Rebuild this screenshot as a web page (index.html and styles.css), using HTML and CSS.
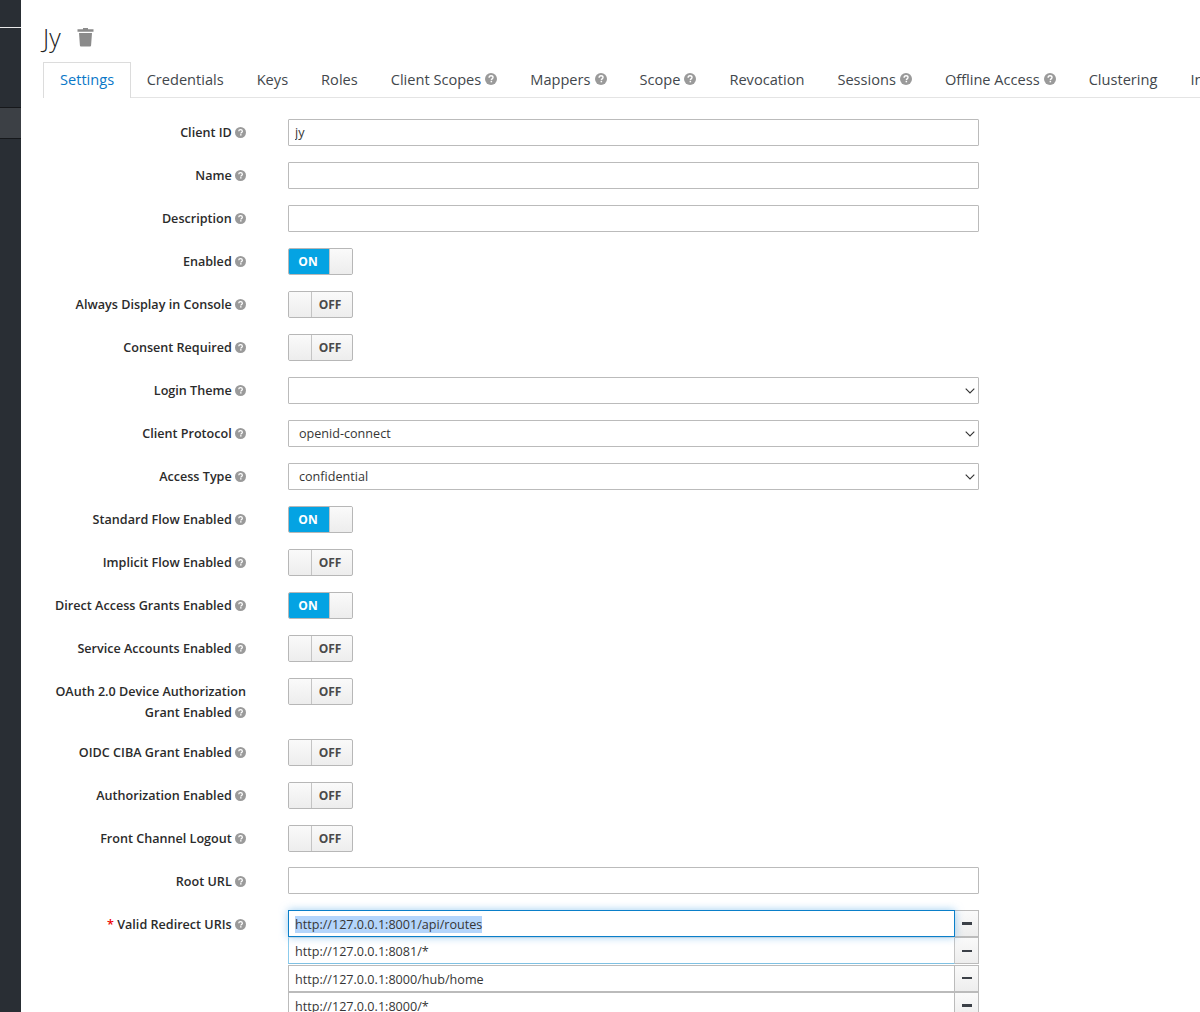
FILE: index.html
```html
<!DOCTYPE html>
<html lang="en">
<head>
<meta charset="utf-8">
<title>Jy</title>
<link rel="stylesheet" href="styles.css">
</head>
<body>
<svg class="defs" width="0" height="0" aria-hidden="true">
  <symbol id="help" viewBox="0 0 12 12">
    <circle cx="6" cy="6" r="6" fill="#9a9a9a"/>
    <path d="M4.1 4.7c0-1.2.9-1.9 2-1.9 1.1 0 1.9.7 1.9 1.7 0 1.4-1.6 1.4-1.6 2.5" fill="none" stroke="#fff" stroke-width="1.4"/>
    <rect x="5.6" y="7.8" width="1.5" height="1.5" fill="#fff"/>
  </symbol>
</svg>
<div class="app">
  <aside class="sidebar">
    <div class="side-line"></div>
    <div class="side-active"></div>
  </aside>
  <main class="main">
    <header class="title">
      <h1>Jy</h1>
      <svg class="trash" viewBox="0 0 17 20" aria-hidden="true"><path d="M6 2.2V1h5v1.2h5.5v2.6H.5V2.2zM2 6h13l-.9 12.2c0 .9-.6 1.3-1.3 1.3H4.2c-.7 0-1.3-.4-1.3-1.3z" fill="#8b8b8b"/></svg>
    </header>
    <nav class="tabs">
      <a class="tab active">Settings</a>
      <a class="tab">Credentials</a>
      <a class="tab">Keys</a>
      <a class="tab">Roles</a>
      <a class="tab">Client Scopes <svg class="help tab-help"><use href="#help"/></svg></a>
      <a class="tab">Mappers <svg class="help tab-help"><use href="#help"/></svg></a>
      <a class="tab">Scope <svg class="help tab-help"><use href="#help"/></svg></a>
      <a class="tab">Revocation</a>
      <a class="tab">Sessions <svg class="help tab-help"><use href="#help"/></svg></a>
      <a class="tab">Offline Access <svg class="help tab-help"><use href="#help"/></svg></a>
      <a class="tab">Clustering</a>
      <a class="tab">In</a>
    </nav>
    <form class="form">
      <div class="row"><label>Client ID <svg class="help"><use href="#help"/></svg></label><input class="field" value="jy"></div>
      <div class="row"><label>Name <svg class="help"><use href="#help"/></svg></label><input class="field"></div>
      <div class="row"><label>Description <svg class="help"><use href="#help"/></svg></label><input class="field"></div>
      <div class="row"><label>Enabled <svg class="help"><use href="#help"/></svg></label><div class="switch on"><span class="state">ON</span><span class="knob"></span></div></div>
      <div class="row"><label>Always Display in Console <svg class="help"><use href="#help"/></svg></label><div class="switch"><span class="knob"></span><span class="state">OFF</span></div></div>
      <div class="row"><label>Consent Required <svg class="help"><use href="#help"/></svg></label><div class="switch"><span class="knob"></span><span class="state">OFF</span></div></div>
      <div class="row"><label>Login Theme <svg class="help"><use href="#help"/></svg></label><div class="field select"><span></span><svg class="chev" viewBox="0 0 10 6"><path d="M.7.7 5 5 9.3.7" fill="none" stroke="#333" stroke-width="1.1"/></svg></div></div>
      <div class="row"><label>Client Protocol <svg class="help"><use href="#help"/></svg></label><div class="field select"><span>openid-connect</span><svg class="chev" viewBox="0 0 10 6"><path d="M.7.7 5 5 9.3.7" fill="none" stroke="#333" stroke-width="1.1"/></svg></div></div>
      <div class="row"><label>Access Type <svg class="help"><use href="#help"/></svg></label><div class="field select"><span>confidential</span><svg class="chev" viewBox="0 0 10 6"><path d="M.7.7 5 5 9.3.7" fill="none" stroke="#333" stroke-width="1.1"/></svg></div></div>
      <div class="row"><label>Standard Flow Enabled <svg class="help"><use href="#help"/></svg></label><div class="switch on"><span class="state">ON</span><span class="knob"></span></div></div>
      <div class="row"><label>Implicit Flow Enabled <svg class="help"><use href="#help"/></svg></label><div class="switch"><span class="knob"></span><span class="state">OFF</span></div></div>
      <div class="row"><label>Direct Access Grants Enabled <svg class="help"><use href="#help"/></svg></label><div class="switch on"><span class="state">ON</span><span class="knob"></span></div></div>
      <div class="row"><label>Service Accounts Enabled <svg class="help"><use href="#help"/></svg></label><div class="switch"><span class="knob"></span><span class="state">OFF</span></div></div>
      <div class="row tall"><label>OAuth 2.0 Device Authorization Grant Enabled <svg class="help"><use href="#help"/></svg></label><div class="switch"><span class="knob"></span><span class="state">OFF</span></div></div>
      <div class="row"><label>OIDC CIBA Grant Enabled <svg class="help"><use href="#help"/></svg></label><div class="switch"><span class="knob"></span><span class="state">OFF</span></div></div>
      <div class="row"><label>Authorization Enabled <svg class="help"><use href="#help"/></svg></label><div class="switch"><span class="knob"></span><span class="state">OFF</span></div></div>
      <div class="row before-url"><label>Front Channel Logout <svg class="help"><use href="#help"/></svg></label><div class="switch"><span class="knob"></span><span class="state">OFF</span></div></div>
      <div class="row low-label"><label>Root URL <svg class="help"><use href="#help"/></svg></label><input class="field"></div>
      <div class="row low-label"><label><span class="req">*</span> Valid Redirect URIs <svg class="help"><use href="#help"/></svg></label>
        <div class="uris">
          <div class="uri"><div class="uri-text focus"><mark>http://127.0.0.1:8001/api/routes</mark></div><button class="minus" type="button"><i></i></button></div>
          <div class="uri"><div class="uri-text hover">http://127.0.0.1:8081/*</div><button class="minus" type="button"><i></i></button></div>
          <div class="uri"><div class="uri-text">http://127.0.0.1:8000/hub/home</div><button class="minus" type="button"><i></i></button></div>
          <div class="uri"><div class="uri-text">http://127.0.0.1:8000/*</div><button class="minus" type="button"><i></i></button></div>
        </div>
      </div>
    </form>
  </main>
</div>
</body>
</html>
```
FILE: styles.css
```css
html, body {
  margin: 0;
  height: 1012px;
  overflow: hidden;
  background: #fff;
}
body {
  font-family: "Open Sans", "Liberation Sans", sans-serif;
  font-size: 12.6px;
  color: #363636;
}
.defs { position: absolute; }
.app { display: flex; height: 1012px; overflow: hidden; }
.sidebar {
  flex: 0 0 21px;
  background: #292e34;
  padding-top: 27px;
}
.side-line { height: 1px; background: #e8e8e8; }
.side-active {
  margin-top: 79px;
  height: 30px;
  background: #3c4045;
  border-top: 1px solid #16181b;
  border-bottom: 1px solid #16181b;
}
.main {
  flex: 1;
  min-width: 0;
  padding-left: 22px;
  overflow: hidden;
}
.title {
  display: flex;
  align-items: center;
  gap: 16px;
  height: 62px;
  padding-top: 13px;
  padding-bottom: 1px;
  box-sizing: border-box;
}
.title h1 {
  margin: 0;
  font-size: 25px;
  font-weight: 300;
  color: #222;
  line-height: 32px;
}
.trash { width: 17px; height: 20px; }
.tabs {
  display: flex;
  height: 35px;
  border-bottom: 1px solid #e4e4e4;
  white-space: nowrap;
}
.tab {
  flex: none;
  box-sizing: border-box;
  display: flex;
  align-items: center;
  gap: 4px;
  padding: 0 16px 2px;
  margin-right: 1px;
  font-size: 14.6px;
  color: #42474c;
  height: 35px;
}
.tab.active {
  color: #0a78c8;
  background: #fff;
  border: 1px solid #dcdcdc;
  border-bottom: 0;
  height: 36px;
  padding: 0 16px 4px;
  margin-right: -.5px;
}
.help { width: 11px; height: 11px; flex: none; vertical-align: -1px; }
.tab-help { width: 12px; height: 12px; }
.form { padding-top: 21px; }
.row {
  display: grid;
  grid-template-columns: 203px 691px;
  column-gap: 42px;
  align-items: start;
  height: 27px;
  margin-bottom: 16px;
}
.row.tall { height: 45px; }
.row.before-url { margin-bottom: 15px; }
.row label {
  text-align: right;
  font-weight: 600;
  font-size: 12.6px;
  line-height: 21px;
  padding-top: 3px;
  color: #2b2b2b;
}
.row.low-label label { padding-top: 4px; }
.req { color: #e00; }
.field {
  box-sizing: border-box;
  width: 691px;
  height: 27px;
  margin: 0;
  padding: 0 6px 1px;
  border: 1px solid #bbb;
  border-radius: 1px;
  font: 12.6px "Open Sans", "Liberation Sans", sans-serif;
  color: #363636;
  background: #fff;
  outline: none;
}
.select {
  display: flex;
  align-items: center;
  justify-content: space-between;
  padding: 0 3px 0 10px;
}
.chev { width: 10px; height: 6px; }
.switch {
  box-sizing: border-box;
  display: flex;
  width: 65px;
  height: 27px;
  border: 1px solid #b7b7b7;
  border-radius: 2px;
  overflow: hidden;
  font-size: 12px;
  font-weight: 700;
  background: linear-gradient(#fafafa, #ededed);
}
.knob {
  flex: 0 0 23px;
  box-sizing: border-box;
  background: linear-gradient(#fafafa, #ededed);
  border-right: 1px solid #c4c4c4;
}
.state {
  flex: 1;
  display: flex;
  align-items: center;
  justify-content: center;
  color: #4a4a4a;
  padding-right: 4px;
}
.switch.on .state {
  flex: 0 0 40px;
  box-sizing: border-box;
  background: #04a3e3;
  color: #fff;
  padding-right: 2px;
}
.switch.on .knob {
  flex: 1;
  border-right: 0;
  border-left: 1px solid #c4c4c4;
}
.uris { width: 691px; }
.uri { display: flex; height: 27.4px; }
.uri-text {
  box-sizing: border-box;
  flex: 1;
  height: 27px;
  padding: 0 6px;
  line-height: 27px;
  border: 1px solid #bbb;
  white-space: nowrap;
  background: #fff;
}
.uri-text.focus {
  border-color: #0a7fc9;
  box-shadow: 0 0 9px rgba(90, 170, 230, .6);
  position: relative;
}
.uri-text.hover {
  border-color: #e5e5e5 #c4c4c4 #7fc1e3 #8ccbec;
}
mark { background: #b4d5fb; color: inherit; }
.minus {
  box-sizing: border-box;
  flex: 0 0 24px;
  height: 27px;
  padding: 0;
  border: 1px solid #bbb;
  border-left: 0;
  background: linear-gradient(#fafafa, #ededed);
  display: flex;
  align-items: center;
  justify-content: center;
}
.minus i { width: 10px; height: 2.4px; background: #3b4047; }
```
